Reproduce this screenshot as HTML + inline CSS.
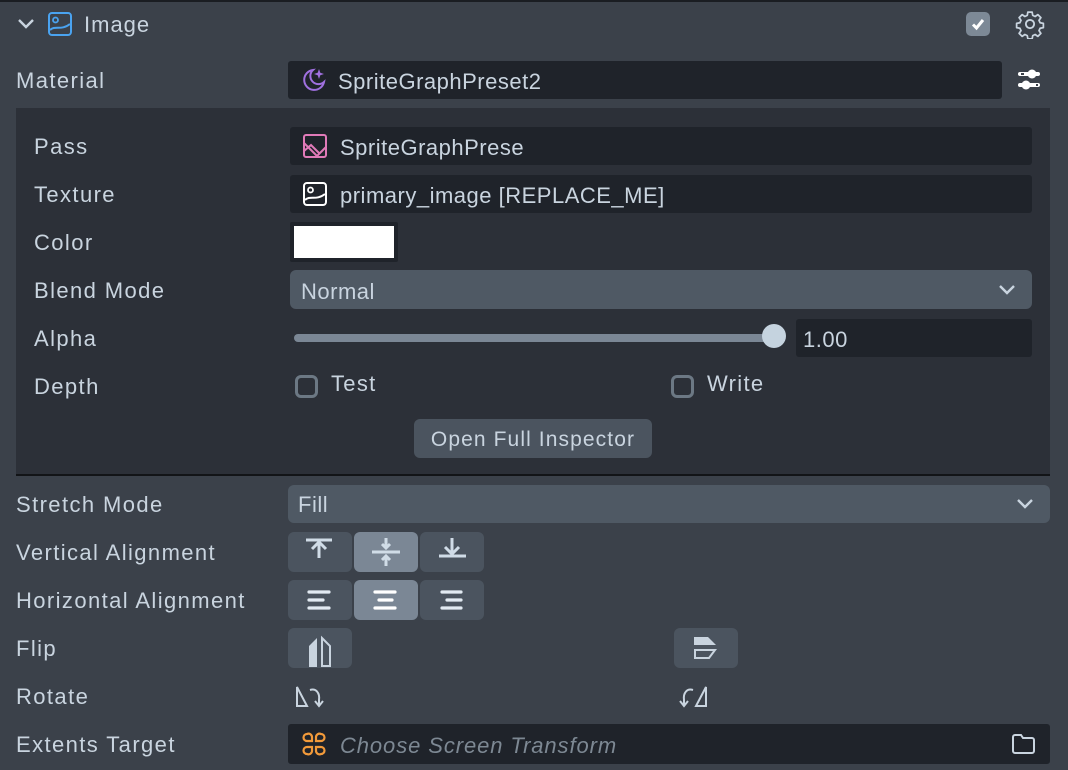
<!DOCTYPE html>
<html><head><style>
*{margin:0;padding:0;box-sizing:border-box}
body{width:1068px;height:770px;background:#3b414a;font-family:"Liberation Sans",sans-serif;color:#c9d4df;position:relative;overflow:hidden;font-size:22px}
.a{position:absolute}
.lbl{position:absolute;line-height:24px;letter-spacing:1.4px;top:0;white-space:nowrap}
.fld{position:absolute;background:#1f232a;border-radius:3px}
.dd{position:absolute;background:#4f5964;border-radius:6px}
.btn{position:absolute;background:#4b545f;border-radius:6px}
.sel{background:#7b8795}
.t{position:absolute;line-height:24px;white-space:nowrap;letter-spacing:0.5px}
</style></head><body>
<div class="a" style="left:0;top:0;width:1068px;height:2px;background:#1a1d22"></div>
<svg class="a" style="left:17px;top:16px" width="18" height="16"><path d="M2 4l7 7 7-7" stroke="#c9d4df" stroke-width="2.4" fill="none"/></svg>
<svg class="a" style="left:48px;top:12px" width="24" height="24"><rect x="1" y="1" width="22" height="22" rx="3" stroke="#4aa3f0" stroke-width="2" fill="none"/><circle cx="7.5" cy="8" r="2.5" stroke="#4aa3f0" stroke-width="1.8" fill="none"/><path d="M2 18c5-5 11 1 20-6" stroke="#4aa3f0" stroke-width="2" fill="none"/></svg>
<div class="t" style="left:84px;top:13px;letter-spacing:1px">Image</div>
<div class="a" style="left:966px;top:12px;width:24px;height:24px;border-radius:5px;background:#7d8996"></div>
<svg class="a" style="left:966px;top:12px" width="24" height="24"><path d="M7 12.5l3.5 3.5 6.5-8" stroke="#fff" stroke-width="3" fill="none"/></svg>
<svg class="a" style="left:1015px;top:9px" width="30" height="30" viewBox="0 0 24 24"><path d="M10.3 2.5h3.4l.5 2.6 1.9.9 2.2-1.5 2.4 2.4-1.5 2.2.9 1.9 2.6.5v3.4l-2.6.5-.9 1.9 1.5 2.2-2.4 2.4-2.2-1.5-1.9.9-.5 2.6h-3.4l-.5-2.6-1.9-.9-2.2 1.5-2.4-2.4 1.5-2.2-.9-1.9-2.6-.5v-3.4l2.6-.5.9-1.9-1.5-2.2 2.4-2.4 2.2 1.5 1.9-.9z" stroke="#c9d4df" stroke-width="1.4" fill="none" stroke-linejoin="round"/><circle cx="12" cy="12" r="3.3" stroke="#c9d4df" stroke-width="1.5" fill="none"/></svg>

<div class="lbl" style="left:16px;top:69px">Material</div>
<div class="fld" style="left:288px;top:61px;width:714px;height:38px"></div>
<svg class="a" style="left:300px;top:66px" width="28" height="28"><path d="M13 4a10 10 0 1 0 11 12a8 8 0 0 1 -11-12z" stroke="#a070e0" stroke-width="2" fill="none"/><path d="M19 3l1.3 3.7 3.7 1.3-3.7 1.3-1.3 3.7-1.3-3.7-3.7-1.3 3.7-1.3z" fill="#a070e0"/></svg>
<div class="t" style="left:338px;top:70px">SpriteGraphPreset2</div>
<svg class="a" style="left:1016px;top:68px" width="28" height="24"><rect x="2" y="4" width="22" height="4" rx="2" fill="#fff"/><circle cx="16" cy="6" r="4.5" fill="#fff"/><rect x="2" y="15" width="22" height="4" rx="2" fill="#fff"/><circle cx="10" cy="17" r="4.5" fill="#fff"/><rect x="5" y="5" width="3" height="2" fill="#3b414a"/><rect x="20" y="16" width="2" height="2" fill="#3b414a"/></svg>

<div class="a" style="left:16px;top:108px;width:1034px;height:366px;background:#2c3038"></div>
<div class="a" style="left:16px;top:474px;width:1034px;height:2px;background:#121417"></div>

<div class="lbl" style="left:34px;top:135px">Pass</div>
<div class="fld" style="left:290px;top:127px;width:742px;height:38px"></div>
<svg class="a" style="left:303px;top:134px" width="24" height="24" stroke="#e07ab8" stroke-width="2" fill="none"><rect x="1" y="1" width="22" height="22" rx="2"/><path d="M1 9l14 14M1 17l7-6 8 8M13 23l10-10"/></svg>
<div class="t" style="left:340px;top:136px">SpriteGraphPrese</div>

<div class="lbl" style="left:34px;top:183px">Texture</div>
<div class="fld" style="left:290px;top:175px;width:742px;height:38px"></div>
<svg class="a" style="left:303px;top:182px" width="24" height="24"><rect x="1" y="1" width="22" height="22" rx="3" stroke="#fff" stroke-width="2" fill="none"/><circle cx="7.5" cy="8" r="2.5" stroke="#fff" stroke-width="1.8" fill="none"/><path d="M2 18c5-5 11 1 20-6" stroke="#fff" stroke-width="2" fill="none"/></svg>
<div class="t" style="left:340px;top:184px">primary_image [REPLACE_ME]</div>

<div class="lbl" style="left:34px;top:231px">Color</div>
<div class="a" style="left:290px;top:222px;width:108px;height:40px;background:#1f232a;border-radius:2px"></div>
<div class="a" style="left:294px;top:226px;width:100px;height:32px;background:#fff"></div>

<div class="lbl" style="left:34px;top:279px">Blend Mode</div>
<div class="dd" style="left:290px;top:270px;width:742px;height:39px"></div>
<div class="t" style="left:301px;top:280px">Normal</div>
<svg class="a" style="left:998px;top:283px" width="18" height="14"><path d="M2 3l7 7 7-7" stroke="#c9d4df" stroke-width="2.4" fill="none"/></svg>

<div class="lbl" style="left:34px;top:327px">Alpha</div>
<div class="a" style="left:294px;top:334px;width:480px;height:8px;border-radius:4px;background:#7b8795"></div>
<div class="a" style="left:762px;top:324px;width:24px;height:24px;border-radius:12px;background:#c5d3df"></div>
<div class="fld" style="left:796px;top:319px;width:236px;height:38px"></div>
<div class="t" style="left:803px;top:328px">1.00</div>

<div class="lbl" style="left:34px;top:375px">Depth</div>
<div class="a" style="left:295px;top:375px;width:23px;height:23px;border:3px solid #6c7884;border-radius:6px"></div>
<div class="t" style="left:331px;top:372px;letter-spacing:1.3px">Test</div>
<div class="a" style="left:671px;top:375px;width:23px;height:23px;border:3px solid #6c7884;border-radius:6px"></div>
<div class="t" style="left:707px;top:372px;letter-spacing:1.3px">Write</div>

<div class="btn" style="left:414px;top:419px;width:238px;height:39px"></div>
<div class="t" style="left:414px;top:428px;width:238px;text-align:center;font-size:21px;letter-spacing:1.1px">Open Full Inspector</div>

<div class="lbl" style="left:16px;top:493px">Stretch Mode</div>
<div class="dd" style="left:288px;top:485px;width:762px;height:38px"></div>
<div class="t" style="left:298px;top:493px">Fill</div>
<svg class="a" style="left:1016px;top:497px" width="18" height="14"><path d="M2 3l7 7 7-7" stroke="#c9d4df" stroke-width="2.4" fill="none"/></svg>

<div class="lbl" style="left:16px;top:541px">Vertical Alignment</div>
<div class="btn" style="left:288px;top:532px;width:64px;height:40px"></div>
<div class="btn sel" style="left:354px;top:532px;width:64px;height:40px"></div>
<div class="btn" style="left:420px;top:532px;width:64px;height:40px"></div>
<svg class="a" style="left:288px;top:532px" width="196" height="40" stroke="#d0dce7" stroke-width="3" fill="none"><path d="M18 8h26M31 26V10M24 17l7-7 7 7"/><path d="M84 20h28M98 6v10M94 12l4 4 4-4M98 34v-10M94 28l4-4 4 4"/><path d="M151 24h27M164 6v16M157 15l7 7 7-7"/></svg>

<div class="lbl" style="left:16px;top:589px">Horizontal Alignment</div>
<div class="btn" style="left:288px;top:580px;width:64px;height:40px"></div>
<div class="btn sel" style="left:354px;top:580px;width:64px;height:40px"></div>
<div class="btn" style="left:420px;top:580px;width:64px;height:40px"></div>
<svg class="a" style="left:288px;top:580px" width="196" height="40" stroke="#e2eaf2" stroke-width="3.2" stroke-linecap="round" fill="none"><path d="M21 12h20M21 20h14M21 28h20"/><path d="M87 12h20M91 20h13M87 28h20" stroke="#fff"/><path d="M154 12h19M159 20h14M154 28h19"/></svg>

<div class="lbl" style="left:16px;top:637px">Flip</div>
<div class="btn" style="left:288px;top:628px;width:64px;height:40px"></div>
<div class="btn" style="left:674px;top:628px;width:64px;height:40px"></div>
<svg class="a" style="left:288px;top:628px" width="64" height="40"><path d="M29 10L21 18v21h8z" fill="#c9d4df"/><path d="M34 10l8 8v20h-8z" stroke="#c9d4df" stroke-width="2" fill="none"/></svg>
<svg class="a" style="left:674px;top:628px" width="64" height="40"><path d="M20 9h14l8 8H20z" fill="#c9d4df"/><path d="M21 22h20l-6 8H21z" stroke="#c9d4df" stroke-width="2" fill="none"/></svg>

<div class="lbl" style="left:16px;top:685px">Rotate</div>
<svg class="a" style="left:294px;top:684px" width="32" height="26" stroke="#c9d4df" stroke-width="2" fill="none"><path d="M3 3v19h10z"/><path d="M16 6c6-2 10 3 9 10v5M21 17l4 5 4-5"/></svg>
<svg class="a" style="left:678px;top:684px" width="32" height="26" stroke="#c9d4df" stroke-width="2" fill="none"><path d="M28 3v19H18z"/><path d="M15 6c-6-2-10 3-9 10v5M2 17l4 5 4-5"/></svg>

<div class="lbl" style="left:16px;top:733px">Extents Target</div>
<div class="fld" style="left:288px;top:724px;width:762px;height:40px"></div>
<svg class="a" style="left:301px;top:731px" width="26" height="26" stroke="#f29a3a" stroke-width="2.2" fill="none"><path d="M11 10H6a3.5 3.5 0 0 1 0-7a3.5 3.5 0 0 1 5 3z M15 10h5a3.5 3.5 0 0 0 0-7a3.5 3.5 0 0 0-5 3z M11 16H6a3.5 3.5 0 0 0 0 7a3.5 3.5 0 0 0 5-3z M15 16h5a3.5 3.5 0 0 1 0 7a3.5 3.5 0 0 1-5-3z"/></svg>
<div class="t" style="left:340px;top:734px;font-style:italic;color:#7d8893;letter-spacing:0.9px">Choose Screen Transform</div>
<svg class="a" style="left:1011px;top:733px" width="26" height="22"><path d="M2 4a2 2 0 0 1 2-2h6l2 3h9a2 2 0 0 1 2 2v11a2 2 0 0 1-2 2H4a2 2 0 0 1-2-2z" stroke="#c9d4df" stroke-width="2" fill="none"/></svg>
</body></html>
